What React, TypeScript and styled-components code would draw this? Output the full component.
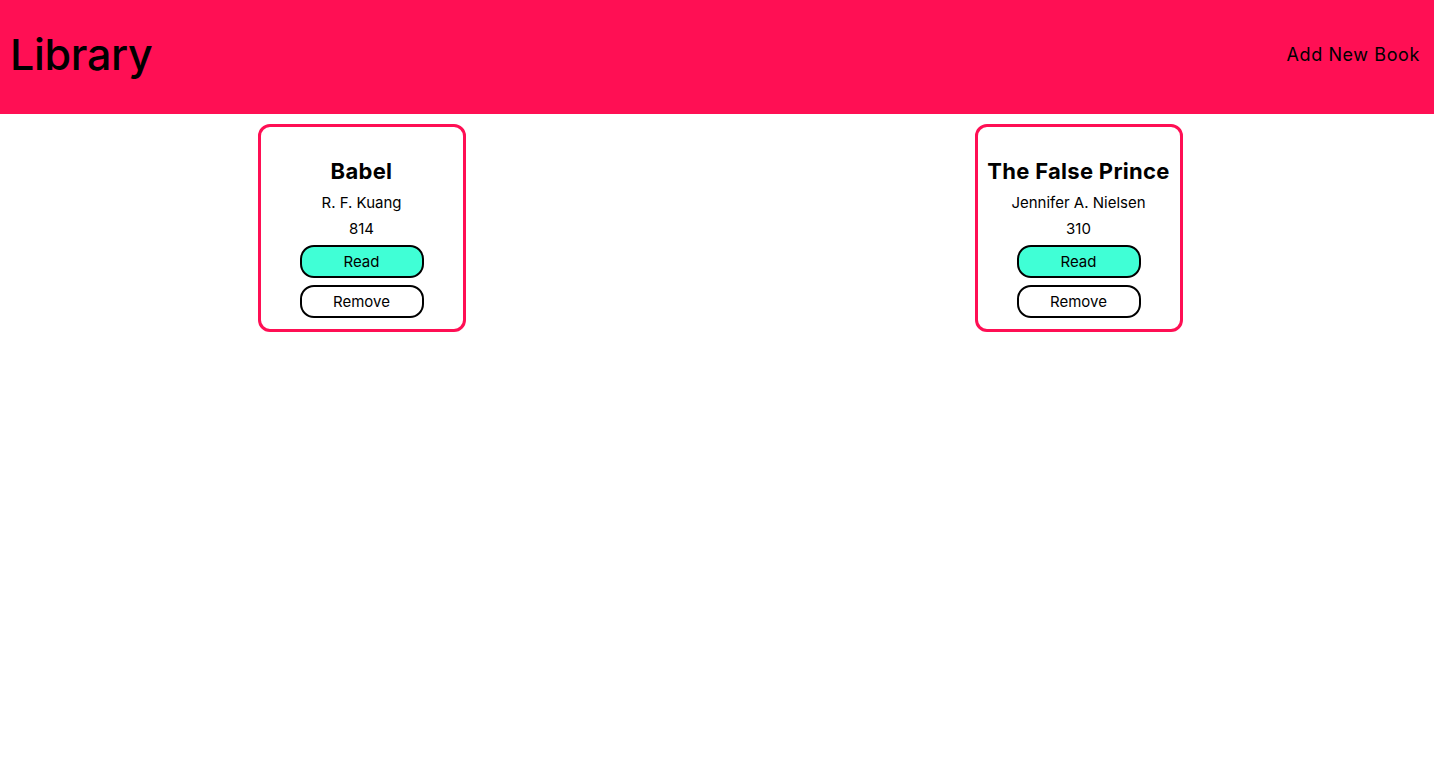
import React from "react";
import styled, { createGlobalStyle } from "styled-components";

const GlobalStyle = createGlobalStyle`
  html, body {
    margin: 0;
    padding: 0;
    background: #ffffff;
    overflow: hidden;
  }
  body {
    font-family: Inter, "Noto Sans", "Liberation Sans", sans-serif;
    color: #000000;
  }
`;

const Page = styled.div`
  min-height: 782px;
  display: flex;
  flex-direction: column;
`;

const Header = styled.header`
  height: 114px;
  box-sizing: border-box;
  background: #ff0f54;
  display: flex;
  align-items: center;
  justify-content: space-between;
  padding: 0 14px 6px 10px;
`;

const Brand = styled.h1`
  margin: 0;
  font-size: 43px;
  font-weight: 500;
  letter-spacing: -0.3px;
`;

const AddButton = styled.button`
  border: none;
  background: transparent;
  padding: 0;
  font-family: inherit;
  font-size: 18px;
  letter-spacing: 0.6px;
  color: #000000;
  cursor: pointer;
`;

const Shelf = styled.main`
  display: grid;
  grid-template-columns: repeat(2, 1fr);
  justify-items: center;
  gap: 6px;
  padding: 10px 0 0 6px;
`;

const Card = styled.article`
  width: 208px;
  height: 208px;
  box-sizing: border-box;
  border: 3px solid #ff0f54;
  border-radius: 12px;
  padding: 30px 0 0;
  display: flex;
  flex-direction: column;
  align-items: center;
`;

const Title = styled.h2`
  margin: 0;
  font-size: 22px;
  line-height: 28px;
  font-weight: 700;
  letter-spacing: 0.3px;
  white-space: nowrap;
`;

const Meta = styled.p<{ $top?: number }>`
  margin: ${(p) => p.$top ?? 0}px 0 0;
  font-size: 15px;
  line-height: 26px;
`;

const Actions = styled.div`
  margin-top: 3px;
  display: flex;
  flex-direction: column;
  gap: 7px;
`;

const Pill = styled.button<{ $active?: boolean }>`
  width: 124px;
  height: 33px;
  box-sizing: border-box;
  border: 2px solid #000000;
  border-radius: 14px;
  background: ${(p) => (p.$active ? "#40ffd6" : "#ffffff")};
  font-family: inherit;
  font-size: 15px;
  color: #000000;
  padding: 0;
  cursor: pointer;
`;

type Book = { title: string; author: string; pages: number; read: boolean };

const books: Book[] = [
  { title: "Babel", author: "R. F. Kuang", pages: 814, read: true },
  { title: "The False Prince", author: "Jennifer A. Nielsen", pages: 310, read: true },
];

export default function App() {
  return (
    <Page>
      <GlobalStyle />
      <Header>
        <Brand>Library</Brand>
        <AddButton>Add New Book</AddButton>
      </Header>
      <Shelf>
        {books.map((b) => (
          <Card key={b.title}>
            <Title>{b.title}</Title>
            <Meta $top={5}>{b.author}</Meta>
            <Meta>{b.pages}</Meta>
            <Actions>
              <Pill $active={b.read}>{b.read ? "Read" : "Not read"}</Pill>
              <Pill>Remove</Pill>
            </Actions>
          </Card>
        ))}
      </Shelf>
    </Page>
  );
}
